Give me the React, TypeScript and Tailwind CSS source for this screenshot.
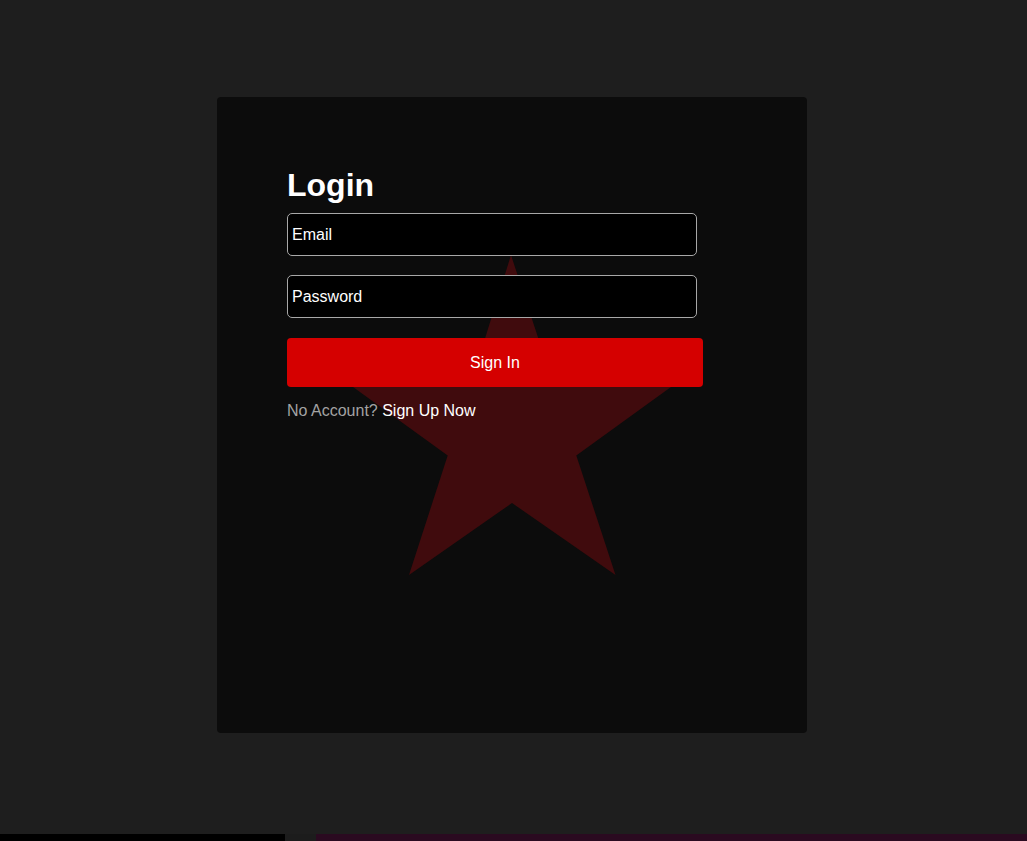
import React from "react";

export default function App() {
  return (
    <div className="flex min-h-[841px] w-full flex-col bg-[#1e1e1e]" style={{ fontFamily: '"Liberation Sans", Arial, sans-serif' }}>
      <div className="flex h-[834px] items-center justify-center pr-[3px] pb-[4px]">
        <div className="relative h-[636px] w-[590px] overflow-hidden rounded-[4px] bg-[#0c0c0c]">
          <svg className="absolute left-0 top-0" width="590" height="636" viewBox="0 0 590 636">
            <polygon
              fill="#400b0d"
              points="294,158 334.3,281 466.4,281 359.3,358.4 398.5,478 295,406 192,478 230.7,358.4 123.6,281 255.7,281"
            />
          </svg>
          <div className="relative flex flex-col px-[70px] pt-[70px]">
            <h1 className="text-[32px] font-bold leading-[37px] text-white">Login</h1>
            <input
              type="text"
              placeholder="Email"
              className="mt-[9px] h-[43px] w-[410px] rounded-[5px] border border-[#a8a8a8] bg-black px-[4px] text-[16px] text-white outline-none placeholder:text-white"
            />
            <input
              type="password"
              placeholder="Password"
              className="mt-[19px] h-[43px] w-[410px] rounded-[5px] border border-[#a8a8a8] bg-black px-[4px] text-[16px] text-white outline-none placeholder:text-white"
            />
            <button className="mt-[20px] h-[49px] w-[416px] rounded-[4px] bg-[#d50000] text-[16px] text-white">
              Sign In
            </button>
            <p className="mt-[15px] text-[16px] leading-[18px] text-[#a3a3a3]">
              No Account? <span className="text-white">Sign Up Now</span>
            </p>
          </div>
        </div>
      </div>
      <div className="flex h-[7px] w-full">
        <div className="h-full w-[285px] bg-black" />
        <div className="h-full w-[31px] bg-[#1c1c1c]" />
        <div className="h-full flex-1 bg-[#2a0a20]" />
      </div>
    </div>
  );
}
